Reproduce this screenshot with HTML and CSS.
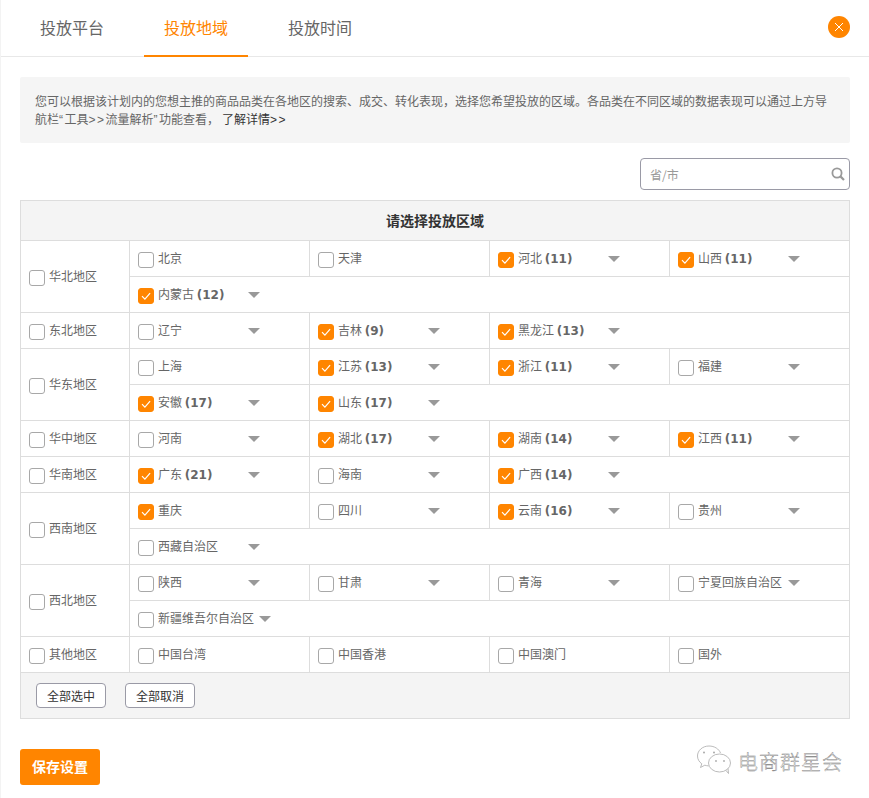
FILE: index.html
```html
<!DOCTYPE html>
<html lang="zh-CN">
<head>
<meta charset="utf-8">
<title>投放地域</title>
<link rel="stylesheet" href="styles.css">
</head>
<body>
<svg class="defs" width="0" height="0" aria-hidden="true"><symbol id="chk" viewBox="0 0 16 16"><path d="M4 8.2l2.9 3 5.2-6" fill="none" stroke="#fff" stroke-width="1.2"/></symbol></svg>
<header class="tabs">
  <div class="tab">投放平台</div>
  <div class="tab active">投放地域</div>
  <div class="tab">投放时间</div>
  <div class="close"><svg width="22" height="22" viewBox="0 0 22 22"><path d="M7 7l8 8M15 7l-8 8" stroke="#fff" stroke-width="1" fill="none"/></svg></div>
</header>
<main class="main">
  <div class="info">您可以根据该计划内的您想主推的商品品类在各地区的搜索、成交、转化表现<span class="mid">，</span>选择您希望投放的区域。各品类在不同区域的数据表现可以通过上方导航栏<span class="lat">“</span>工具<span class="lat">&gt;&gt;</span>流量解析<span class="lat">”</span>功能查看<span class="mid">，</span><a class="more">了解详情<span class="lat">&gt;&gt;</span></a></div>
  <div class="search-row">
    <div class="search"><span>省/市</span><svg width="14" height="14" viewBox="0 0 14 14"><circle cx="6" cy="6" r="4.6" fill="none" stroke="#999" stroke-width="1.8"/><path d="M9.4 9.4l3.6 3.6" stroke="#999" stroke-width="2.2"/></svg></div>
  </div>
  <section class="table">
    <div class="thead">请选择投放区域</div>

    <div class="region">
      <div class="area"><i class="box"></i><span class="alabel">华北地区</span></div>
      <div class="rows">
        <div class="row">
          <div class="cell"><i class="box"></i><span class="label">北京</span></div>
          <div class="cell"><i class="box"></i><span class="label">天津</span></div>
          <div class="cell"><i class="box on"><svg><use href="#chk"/></svg></i><span class="label">河北 <b>(11)</b></span><i class="caret"></i></div>
          <div class="cell"><i class="box on"><svg><use href="#chk"/></svg></i><span class="label">山西 <b>(11)</b></span><i class="caret"></i></div>
        </div>
        <div class="row">
          <div class="cell"><i class="box on"><svg><use href="#chk"/></svg></i><span class="label">内蒙古 <b>(12)</b></span><i class="caret"></i></div>
        </div>
      </div>
    </div>

    <div class="region">
      <div class="area"><i class="box"></i><span class="alabel">东北地区</span></div>
      <div class="rows">
        <div class="row">
          <div class="cell"><i class="box"></i><span class="label">辽宁</span><i class="caret"></i></div>
          <div class="cell"><i class="box on"><svg><use href="#chk"/></svg></i><span class="label">吉林 <b>(9)</b></span><i class="caret"></i></div>
          <div class="cell"><i class="box on"><svg><use href="#chk"/></svg></i><span class="label">黑龙江 <b>(13)</b></span><i class="caret"></i></div>
        </div>
      </div>
    </div>

    <div class="region">
      <div class="area"><i class="box"></i><span class="alabel">华东地区</span></div>
      <div class="rows">
        <div class="row">
          <div class="cell"><i class="box"></i><span class="label">上海</span></div>
          <div class="cell"><i class="box on"><svg><use href="#chk"/></svg></i><span class="label">江苏 <b>(13)</b></span><i class="caret"></i></div>
          <div class="cell"><i class="box on"><svg><use href="#chk"/></svg></i><span class="label">浙江 <b>(11)</b></span><i class="caret"></i></div>
          <div class="cell"><i class="box"></i><span class="label">福建</span><i class="caret"></i></div>
        </div>
        <div class="row">
          <div class="cell"><i class="box on"><svg><use href="#chk"/></svg></i><span class="label">安徽 <b>(17)</b></span><i class="caret"></i></div>
          <div class="cell"><i class="box on"><svg><use href="#chk"/></svg></i><span class="label">山东 <b>(17)</b></span><i class="caret"></i></div>
        </div>
      </div>
    </div>

    <div class="region">
      <div class="area"><i class="box"></i><span class="alabel">华中地区</span></div>
      <div class="rows">
        <div class="row">
          <div class="cell"><i class="box"></i><span class="label">河南</span><i class="caret"></i></div>
          <div class="cell"><i class="box on"><svg><use href="#chk"/></svg></i><span class="label">湖北 <b>(17)</b></span><i class="caret"></i></div>
          <div class="cell"><i class="box on"><svg><use href="#chk"/></svg></i><span class="label">湖南 <b>(14)</b></span><i class="caret"></i></div>
          <div class="cell"><i class="box on"><svg><use href="#chk"/></svg></i><span class="label">江西 <b>(11)</b></span><i class="caret"></i></div>
        </div>
      </div>
    </div>

    <div class="region">
      <div class="area"><i class="box"></i><span class="alabel">华南地区</span></div>
      <div class="rows">
        <div class="row">
          <div class="cell"><i class="box on"><svg><use href="#chk"/></svg></i><span class="label">广东 <b>(21)</b></span><i class="caret"></i></div>
          <div class="cell"><i class="box"></i><span class="label">海南</span><i class="caret"></i></div>
          <div class="cell"><i class="box on"><svg><use href="#chk"/></svg></i><span class="label">广西 <b>(14)</b></span><i class="caret"></i></div>
        </div>
      </div>
    </div>

    <div class="region">
      <div class="area"><i class="box"></i><span class="alabel">西南地区</span></div>
      <div class="rows">
        <div class="row">
          <div class="cell"><i class="box on"><svg><use href="#chk"/></svg></i><span class="label">重庆</span></div>
          <div class="cell"><i class="box"></i><span class="label">四川</span><i class="caret"></i></div>
          <div class="cell"><i class="box on"><svg><use href="#chk"/></svg></i><span class="label">云南 <b>(16)</b></span><i class="caret"></i></div>
          <div class="cell"><i class="box"></i><span class="label">贵州</span><i class="caret"></i></div>
        </div>
        <div class="row">
          <div class="cell"><i class="box"></i><span class="label">西藏自治区</span><i class="caret"></i></div>
        </div>
      </div>
    </div>

    <div class="region">
      <div class="area"><i class="box"></i><span class="alabel">西北地区</span></div>
      <div class="rows">
        <div class="row">
          <div class="cell"><i class="box"></i><span class="label">陕西</span><i class="caret"></i></div>
          <div class="cell"><i class="box"></i><span class="label">甘肃</span><i class="caret"></i></div>
          <div class="cell"><i class="box"></i><span class="label">青海</span><i class="caret"></i></div>
          <div class="cell"><i class="box"></i><span class="label">宁夏回族自治区</span><i class="caret"></i></div>
        </div>
        <div class="row">
          <div class="cell"><i class="box"></i><span class="label">新疆维吾尔自治区</span><i class="caret"></i></div>
        </div>
      </div>
    </div>

    <div class="region">
      <div class="area"><i class="box"></i><span class="alabel">其他地区</span></div>
      <div class="rows">
        <div class="row">
          <div class="cell"><i class="box"></i><span class="label">中国台湾</span></div>
          <div class="cell"><i class="box"></i><span class="label">中国香港</span></div>
          <div class="cell"><i class="box"></i><span class="label">中国澳门</span></div>
          <div class="cell"><i class="box"></i><span class="label">国外</span></div>
        </div>
      </div>
    </div>

    <div class="tfoot">
      <button class="btn">全部选中</button>
      <button class="btn">全部取消</button>
    </div>
  </section>
  <footer class="foot">
    <button class="save">保存设置</button>
    <div class="mark">
      <svg width="36" height="30" viewBox="0 0 36 30"><g fill="none" stroke="#aaa" stroke-width=".8"><path d="M13 1C6.500 1 1.500 5.500 1.500 11c0 3.200 1.700 6 4.300 7.800L4.500 22.500l4.300-2.300c1.200.4 2.500.6 3.800.7"/><path d="M24.500 8C23 4 18.500 1 13 1"/><ellipse cx="23.500" cy="18" rx="11" ry="9"/><path d="M30 25.500l2.500 3-.5-5"/></g><g fill="#aaa"><circle cx="8" cy="7.500" r="1"/><circle cx="18" cy="7.500" r="1"/><circle cx="20" cy="16" r=".9"/><circle cx="28" cy="16" r=".9"/></g></svg>
      <span class="mark-text">电商群星会</span>
    </div>
  </footer>
</main>
</body>
</html>
```
FILE: styles.css
```css
* { box-sizing: border-box; }
html, body { margin: 0; padding: 0; }
body {
  width: 869px;
  min-height: 798px;
  overflow: hidden;
  background: #fff;
  border-left: 1px solid #f3f3f3;
  font-family: "Noto Sans CJK SC", "Noto Sans", sans-serif;
  font-size: 12px;
  color: #666;
}
.defs { position: absolute; }
.tabs {
  display: flex;
  height: 57px;
  padding-left: 19px;
  border-bottom: 1px solid #e8e8e8;
}
.tab {
  width: 104px;
  height: 57px;
  flex: none;
  margin-right: 20px;
  font-size: 16px;
  line-height: 55px;
  text-align: center;
  color: #666;
}
.tab.active {
  color: #ff8500;
  border-bottom: 2px solid #ff8500;
}
.close {
  width: 22px;
  height: 22px;
  margin: 16px 19px 0 auto;
  border-radius: 50%;
  background: #ff8500;
}
.close svg { display: block; }
.main { padding: 20px 19px 0; }
.info {
  height: 66px;
  padding: 15px;
  background: #f5f5f5;
  border-radius: 2px;
  line-height: 18px;
  color: #666;
}
.lat {
  font-family: "Liberation Sans", sans-serif;
  letter-spacing: 1.5px;
}
.mid { font-family: "Noto Sans CJK TC", sans-serif; }
.more {
  margin-left: 3px;
  color: #333;
}
.search-row {
  display: flex;
  justify-content: flex-end;
  margin-top: 15px;
}
.search {
  display: flex;
  align-items: center;
  justify-content: space-between;
  width: 210px;
  height: 32px;
  padding: 0 4px 0 9px;
  border: 1px solid #9a9aa6;
  border-radius: 4px;
  color: #999;
}
.table {
  width: 830px;
  margin-top: 10px;
  border: 1px solid #ddd;
}
.thead {
  height: 40px;
  background: #f4f4f4;
  border-bottom: 1px solid #ddd;
  font-size: 14px;
  font-weight: 700;
  line-height: 39px;
  text-align: center;
  color: #333;
}
.region {
  display: grid;
  grid-template-columns: 109px 719px;
  border-bottom: 1px solid #ddd;
}
.area {
  display: flex;
  align-items: center;
  padding-left: 8px;
  border-right: 1px solid #ddd;
}
.alabel {
  margin-left: 4px;
  margin-bottom: 2px;
}
.row {
  display: grid;
  grid-template-columns: 179px 180px 180px 180px;
  height: 36px;
  border-bottom: 1px solid #ddd;
}
.row:last-child { height: 35px; border-bottom: 0; }
.cell {
  display: flex;
  align-items: center;
  padding-left: 8px;
}
.cell + .cell { border-left: 1px solid #ddd; }
.box {
  display: block;
  flex: none;
  width: 16px;
  height: 16px;
  margin-top: 3px;
  border: 1px solid #a8a8a8;
  border-radius: 3px;
  background: #fff;
}
.box.on {
  border-color: #ff8500;
  background: #ff8500;
}
.box svg {
  display: block;
  width: 16px;
  height: 16px;
  margin: -1px;
}
.label {
  min-width: 85px;
  margin-left: 4px;
  margin-bottom: 2px;
  white-space: nowrap;
}
.label b {
  font-family: "DejaVu Sans", sans-serif;
  font-weight: 700;
}
.caret {
  display: block;
  flex: none;
  width: 0;
  height: 0;
  margin: 1px 0 0 5px;
  border-left: 6px solid transparent;
  border-right: 6px solid transparent;
  border-top: 6px solid #999;
}
.tfoot {
  display: flex;
  gap: 19px;
  height: 45px;
  padding: 10px 0 0 15px;
  background: #f4f4f4;
}
.btn {
  width: 70px;
  height: 25px;
  padding: 0;
  border: 1px solid #9a9aa6;
  border-radius: 4px;
  background: #fff;
  font: 12px "Noto Sans CJK SC", sans-serif;
  color: #333;
}
.foot {
  display: flex;
  align-items: flex-start;
  justify-content: space-between;
  margin-top: 30px;
}
.save {
  width: 80px;
  height: 36px;
  padding: 0 0 2px;
  border: 0;
  border-radius: 3px;
  background: #ff8500;
  font: 700 14px "Noto Sans CJK SC", sans-serif;
  color: #fff;
}
.mark {
  display: flex;
  align-items: center;
  gap: 6px;
  margin: -6px 7px 0 0;
}
.mark svg { display: block; }
.mark-text {
  margin-top: 4px;
  font-size: 20px;
  letter-spacing: 1px;
  font-weight: 300;
  color: #fff;
  -webkit-text-stroke: .4px #777;
}
```
